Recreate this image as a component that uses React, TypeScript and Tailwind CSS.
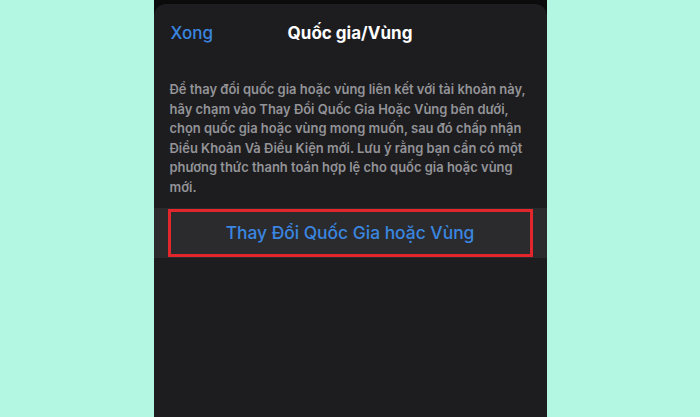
const LINES = [
  "Để thay đổi quốc gia hoặc vùng liên kết với tài khoản này,",
  "hãy chạm vào Thay Đổi Quốc Gia Hoặc Vùng bên dưới,",
  "chọn quốc gia hoặc vùng mong muốn, sau đó chấp nhận",
  "Điều Khoản Và Điều Kiện mới. Lưu ý rằng bạn cần có một",
  "phương thức thanh toán hợp lệ cho quốc gia hoặc vùng",
  "mới.",
];

export default function App() {
  return (
    <div className="flex h-[417px] w-[700px] justify-center bg-[#b3f6e1] font-['Inter',sans-serif]">
      <div className="flex w-[393px] flex-col bg-[#0b0b0c] pt-[4px]">
        <div className="flex flex-1 flex-col rounded-t-[12px] bg-[#1d1d1f] px-[2px]">
          <div className="relative flex h-[60px] items-center px-[15px]">
            <span className="text-[17px] font-medium text-[#3a86e0]">Xong</span>
            <span className="absolute left-1/2 -translate-x-1/2 text-[17px] font-bold text-white">
              Quốc gia/Vùng
            </span>
          </div>
          <p className="mt-[16px] pl-[14px] text-[12.95px] font-semibold leading-[19.5px] text-[#939398]">
            {LINES.map((line) => (
              <span key={line} className="block whitespace-nowrap">
                {line}
              </span>
            ))}
          </p>
          <div className="-mx-[2px] mt-[11px] flex h-[50px] items-center justify-center bg-[#2b2b2d] px-[14px]">
            <div className="flex h-[48px] w-full items-center justify-center border-[3px] border-[#e3262b]">
              <span className="text-[17.4px] font-medium text-[#3a86e0]">Thay Đổi Quốc Gia hoặc Vùng</span>
            </div>
          </div>
        </div>
      </div>
    </div>
  );
}
